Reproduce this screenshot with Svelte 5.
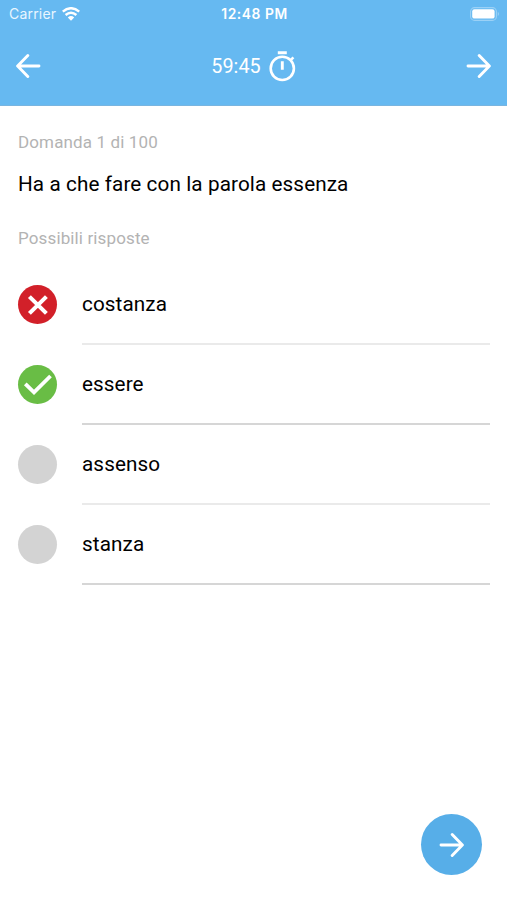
<script>
  const answers = [
    { text: 'costanza', state: 'wrong' },
    { text: 'essere', state: 'correct' },
    { text: 'assenso', state: 'idle' },
    { text: 'stanza', state: 'idle' }
  ];
</script>

{#snippet arrow(back)}
  <svg class="arrow" class:back width="25" height="26" viewBox="0 0 25 26" aria-hidden="true">
    <path d="M2 13H23M13.2 2.6L23.4 13L13.2 23.4" />
  </svg>
{/snippet}

<main>
  <header>
    <div class="status">
      <div class="carrier">
        <span>Carrier</span>
        <svg width="18" height="14" viewBox="0 0 18 14" aria-hidden="true">
          <g fill="none" stroke="#fff" stroke-width="2.5">
            <path d="M.8 4.6Q9-2.1 17.2 4.6" />
            <path d="M3.6 8Q9 3.4 14.4 8" />
          </g>
          <path d="M5.8 10.4Q9 7.8 12.2 10.4L9 13.7Z" fill="#fff" />
        </svg>
      </div>
      <span class="clock">12:48 PM</span>
      <svg class="battery" width="30" height="14" viewBox="0 0 30 14" aria-hidden="true">
        <rect x=".6" y=".6" width="25.8" height="12.8" rx="4" fill="none" stroke="#fff" stroke-opacity=".35" stroke-width="1.1" />
        <rect x="2.2" y="2.2" width="22.4" height="9.4" rx="2.2" fill="#fff" />
        <path d="M27.8 4.8Q29.8 7 27.8 9.2Z" fill="#fff" fill-opacity=".4" />
      </svg>
    </div>
    <nav>
      <button aria-label="Indietro">{@render arrow(true)}</button>
      <div class="timer">
        <span>59:45</span>
        <svg width="27" height="31" viewBox="0 0 27 31" fill="none" stroke="#fff" aria-hidden="true">
          <circle cx="13.3" cy="17.4" r="11.6" stroke-width="2.6" />
          <path d="M8.8 1.8H17.8M13.3 10.3V18.8" stroke-width="2.9" />
          <path d="M21.4 9.4L24.4 6.4" stroke-width="2.6" />
        </svg>
      </div>
      <button aria-label="Avanti">{@render arrow(false)}</button>
    </nav>
  </header>

  <section>
    <p class="label count">Domanda 1 di 100</p>
    <h1>Ha a che fare con la parola essenza</h1>
    <p class="label hint">Possibili risposte</p>
    <ul>
      {#each answers as a}
        <li>
          <span class="mark {a.state}">
            {#if a.state === 'wrong'}
              <svg width="40" height="40" viewBox="0 0 40 40"><path d="M11.4 11.6L28.4 28.4M28.4 11.6L11.4 28.4" stroke-width="4.1" /></svg>
            {:else if a.state === 'correct'}
              <svg width="40" height="40" viewBox="0 0 40 40"><path d="M7.3 18.9L16 27.4L32.5 11" stroke-width="3.8" /></svg>
            {/if}
          </span>
          <span class="answer">{a.text}</span>
        </li>
      {/each}
    </ul>
  </section>

  <footer>
    <button class="next" aria-label="Prossima domanda">{@render arrow(false)}</button>
  </footer>
</main>

<style>
  :global(body) { margin: 0; background: #fff; }
  main {
    box-sizing: border-box;
    width: 507px;
    height: 900px;
    display: flex;
    flex-direction: column;
    background: #fff;
    font-family: Roboto, sans-serif;
    overflow: hidden;
  }
  header {
    height: 106px;
    flex: none;
    box-sizing: border-box;
    background: #66b9f1;
    border-bottom: 1px solid #79b5e0;
    color: #fff;
  }
  .status {
    display: grid;
    grid-template-columns: 1fr auto 1fr;
    align-items: center;
    height: 27px;
    padding: 0 7px 0 9px;
    font-family: Inter, sans-serif;
  }
  .carrier { display: flex; align-items: center; gap: 6px; font-size: 14px; letter-spacing: .2px; color: #e9f6ff; }
  .clock { font-size: 13.8px; font-weight: 600; letter-spacing: .55px; }
  .battery { justify-self: end; }
  nav { display: flex; justify-content: space-between; align-items: center; height: 78px; padding: 0 15.5px; }
  button { border: 0; padding: 0; background: none; display: flex; align-items: center; justify-content: center; }
  .arrow { display: block; fill: none; stroke: #fff; stroke-width: 2.9; stroke-linecap: round; stroke-linejoin: round; }
  .back { transform: scaleX(-1); }
  .timer { display: flex; align-items: center; gap: 8px; font-size: 19.8px; letter-spacing: .05px; }
  section { flex: 1; padding: 0 17px 0 18px; }
  p, h1, ul { margin: 0; padding: 0; }
  .label { font-size: 17px; line-height: 20px; color: #b3b3b3; letter-spacing: .13px; }
  .count { padding-top: 26px; }
  h1 { padding-top: 19px; font-size: 20.7px; line-height: 26px; font-weight: 400; color: #000; letter-spacing: .1px; }
  .hint { padding-top: 31px; }
  ul { list-style: none; padding-top: 17px; }
  li { display: flex; align-items: stretch; height: 80px; }
  .mark { width: 39px; height: 39px; border-radius: 50%; margin: 20px 25px 0 0; flex: none; background: #d3d3d3; display: flex; align-items: center; justify-content: center; }
  .mark svg { flex: none; fill: none; stroke: #fff; }
  .wrong { background: #d22029; }
  .correct { background: #69bd45; }
  .answer { flex: 1; box-sizing: border-box; border-bottom: 2px solid #eaeaea; line-height: 79px; font-size: 20.7px; color: #000; letter-spacing: .1px; }
  li:nth-child(even) .answer { border-color: #d6d6d6; }
  footer { display: flex; justify-content: flex-end; padding: 0 25px 25px 0; }
  .next { width: 61px; height: 61px; border-radius: 50%; background: #57aee8; }
</style>
